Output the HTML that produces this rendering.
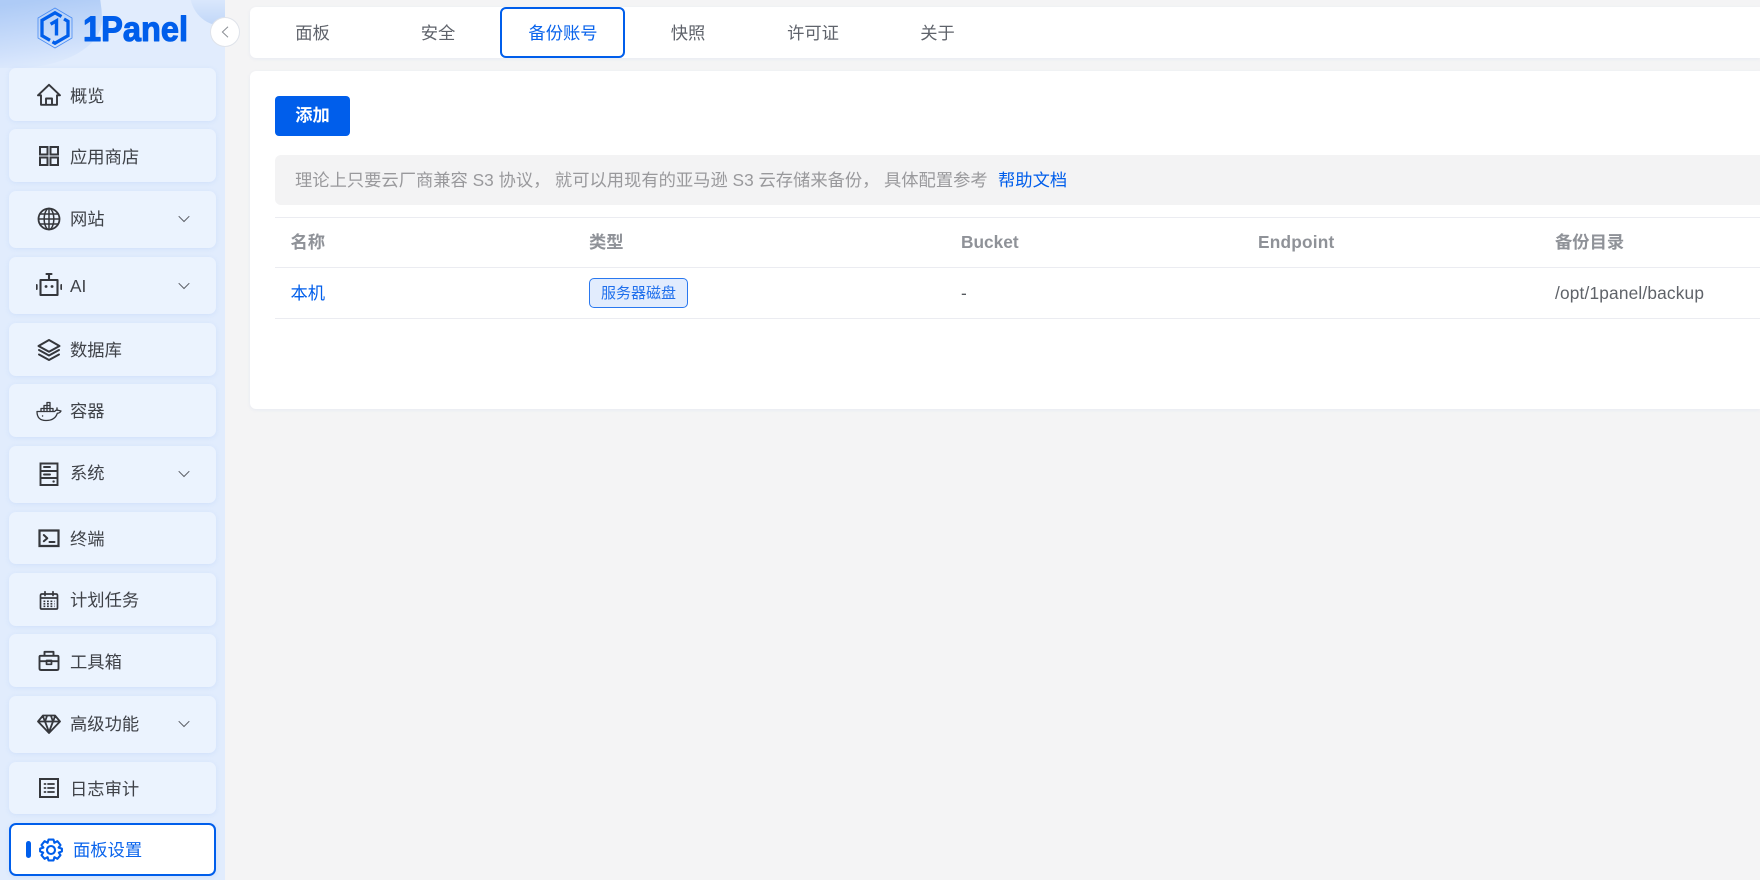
<!DOCTYPE html>
<html lang="zh-CN"><head><meta charset="utf-8"><title>1Panel</title>
<style>
*{box-sizing:border-box}
html,body{margin:0;padding:0;width:1760px;height:880px;overflow:hidden;background:#f4f4f5;font-family:"Liberation Sans","Noto Sans CJK SC",sans-serif;font-size:17.3px}
.a{position:absolute;white-space:nowrap}
.side{position:absolute;left:0;top:0;width:225px;height:880px;background:#e1ecfd;overflow:hidden}
.blob1{position:absolute;left:-20px;top:-97px;width:122px;height:165px;border-radius:0 122px 90px 0/0 122px 50px 0;background:linear-gradient(172deg,#aecbf6 58%,#cfe0fb 84%,#e1ecfd 97%)}
.blob2{position:absolute;left:190px;top:-40px;width:66px;height:66px;border-radius:50%;background:linear-gradient(180deg,#e1ecfd 50%,#c0d6f8)}
.it{position:absolute;left:9px;width:207px;background:#ebf3fe;border-radius:7px;box-shadow:0 1px 4px rgba(170,200,245,.3)}
.t{position:absolute;left:70px;line-height:24px;color:#3f4248;white-space:nowrap}
.ic{position:absolute;left:37px;width:24px;height:24px;fill:none;stroke:#35373c;stroke-width:1.7;stroke-linejoin:round;stroke-linecap:round}
.ch{position:absolute;left:178px;width:12px;height:8px;fill:none;stroke:#5a5d64;stroke-width:1}
.card{position:absolute;left:250px;width:1510px;background:#fff;border-radius:6px 0 0 6px;box-shadow:0 1px 3px rgba(215,222,238,.45)}
.tab{position:absolute;transform:translate(-50%,-50%);color:#5f636b;line-height:24px;white-space:nowrap}
.th{position:absolute;top:230px;line-height:24px;color:#8f9298;font-weight:bold;white-space:nowrap}
.ln{position:absolute;left:275px;width:1485px;height:1px;background:#ebecf1}
.cm{margin-right:4.5px}
</style></head><body>
<div class="side">
<div class="blob1"></div><div class="blob2"></div>
<div class="it" style="top:68px;height:53px"></div>
<div class="it" style="top:129px;height:53px"></div>
<div class="it" style="top:191px;height:57px"></div>
<div class="it" style="top:257px;height:57px"></div>
<div class="it" style="top:323px;height:53px"></div>
<div class="it" style="top:384px;height:53px"></div>
<div class="it" style="top:446px;height:57px"></div>
<div class="it" style="top:512px;height:52px"></div>
<div class="it" style="top:573px;height:53px"></div>
<div class="it" style="top:634px;height:53px"></div>
<div class="it" style="top:696px;height:57px"></div>
<div class="it" style="top:762px;height:52px"></div>
<div class="it" style="top:823px;height:53px;background:#fff;border:2px solid #005eeb"></div>

<svg class="a" style="left:36px;top:6px" width="40" height="44" viewBox="0 0 40 44" fill="none">
<path d="M19 2 36 12V32L19 42 2 32V12Z" stroke="#4a8cf3" stroke-width=".8"/>
<path d="M25.5 10.5 19 6.8 6 14.3V29.7L14 34.3" stroke="#005eeb" stroke-width="3.3" stroke-linejoin="miter"/>
<path d="M28 13 32 15.3V29.7L19 37.2 16.5 35.8" stroke="#005eeb" stroke-width="3.3" stroke-linejoin="miter"/>
<path d="M14.6 18.2 20.5 14.8V29.5" stroke="#005eeb" stroke-width="3.4" stroke-linejoin="miter"/>
</svg>
<svg class="a" style="left:80px;top:8px" width="112" height="40"><text x="3" y="33" font-family="Liberation Sans" font-weight="bold" font-size="35" fill="#005eeb" stroke="#005eeb" stroke-width="1.1" stroke-linejoin="round" textLength="105" lengthAdjust="spacingAndGlyphs">1Panel</text></svg>

<span class="t" style="top:84px">概览</span>
<span class="t" style="top:145px">应用商店</span>
<span class="t" style="top:207px">网站</span>
<span class="t" style="top:274px">AI</span>
<span class="t" style="top:338px">数据库</span>
<span class="t" style="top:399px">容器</span>
<span class="t" style="top:461px">系统</span>
<span class="t" style="top:527px">终端</span>
<span class="t" style="top:588px">计划任务</span>
<span class="t" style="top:650px">工具箱</span>
<span class="t" style="top:712px">高级功能</span>
<span class="t" style="top:777px">日志审计</span>
<span class="t" style="top:838px;left:73px;color:#0a64ec">面板设置</span>
<div class="a" style="left:26px;top:841px;width:5px;height:17px;border-radius:3px;background:#005eeb"></div>

<svg class="ch" style="top:215px" viewBox="0 0 12 8"><path d="M.7 1.2 6 6.5 11.3 1.2"/></svg>
<svg class="ch" style="top:282px" viewBox="0 0 12 8"><path d="M.7 1.2 6 6.5 11.3 1.2"/></svg>
<svg class="ch" style="top:470px" viewBox="0 0 12 8"><path d="M.7 1.2 6 6.5 11.3 1.2"/></svg>
<svg class="ch" style="top:720px" viewBox="0 0 12 8"><path d="M.7 1.2 6 6.5 11.3 1.2"/></svg>

<!-- home -->
<svg class="ic" style="top:83px" viewBox="0 0 24 24"><path d="M12 1.8 1 12.3 4 12.3V21.8H20V12.3H23ZM9 21.8V15.5H15V21.8" stroke-width="1.9"/></svg>
<!-- apps -->
<svg class="ic" style="top:144px" viewBox="0 0 24 24"><path d="M3 3H10.5V10.5H3ZM13.5 3H21V10.5H13.5ZM3 13.5H10.5V21H3ZM13.5 13.5H21V21H13.5Z" stroke-width="2" stroke-linejoin="miter"/></svg>
<!-- globe -->
<svg class="ic" style="top:207px" viewBox="0 0 24 24"><circle cx="12" cy="12" r="10.5" stroke-width="1.8"/><ellipse cx="12" cy="12" rx="4.8" ry="10.5" stroke-width="1.5"/><path d="M12 1.5V22.5M1.5 12H22.5M3 7H21M3 17H21" stroke-width="1.5"/></svg>
<!-- robot -->
<svg class="ic" style="top:272px;left:36px;width:26px;height:26px" viewBox="0 0 26 26"><path d="M4.5 8H21.5V23H4.5ZM13 8V3M10.5 2H15.5" stroke-width="2.1"/><path d="M.7 13V17M25.3 13V17" stroke-width="1.9"/><path d="M10 14.5H10.1M16 14.5H16.1" stroke-width="2.8"/></svg>
<!-- layers -->
<svg class="ic" style="top:338px" viewBox="0 0 24 24"><path d="M12 2 22.5 8 12 13.7 1.5 8ZM2 12 12 17.5 22 12M2 16.5 12 22 22 16.5" stroke-width="2"/></svg>
<!-- docker -->
<svg class="ic" style="top:399px;left:36px;width:26px;height:24px" viewBox="0 0 26 24"><path d="M1 12.5H18.8C19.5 11 21 10.8 22 11.3L25 12C24 14 22.5 14.2 21.3 14.3 19.5 20 14.5 21.5 10 21.5 4.5 21.5 1 19 1 12.5Z" stroke-width="1.3"/><path d="M5 12.5V9.5H17V12.5M8 12.5V6.5H14V12.5M11 12.5V3.5H14V9.5M8 9.5H14" stroke-width="1.3"/><path d="M21 9V11.3M6.5 17H6.6" stroke-width="1.4"/></svg>
<!-- server -->
<svg class="ic" style="top:462px" viewBox="0 0 24 24"><path d="M3.5 1.5H20.5V23H3.5ZM3.5 9H20.5M3.5 16H20.5M7 5H13M7 12.5H13" stroke-width="1.9" stroke-linejoin="miter"/><path d="M16.5 19.5H16.7" stroke-width="2.2"/></svg>
<!-- terminal -->
<svg class="ic" style="top:526px" viewBox="0 0 24 24"><path d="M2.5 4.5H21.5V20H2.5Z" stroke-width="2.2" stroke-linejoin="miter"/><path d="M6.8 9 10.3 12.2 6.8 15.2" stroke-width="2"/><path d="M12.5 16H17.5" stroke-width="2"/></svg>
<!-- calendar -->
<svg class="ic" style="top:587.5px" viewBox="0 0 24 24"><path d="M5 6H19Q20.5 6 20.5 7.5V20Q20.5 21 19.5 21H4.5Q3.5 21 3.5 20V7.5Q3.5 6 5 6ZM3.5 10H20.5M8 3.7V7.5M16 3.7V7.5" stroke-width="1.7"/><path d="M6.5 13.3H17.5M6.5 15.8H17.5M6.5 18.3H17.5" stroke-width="1.6" stroke-dasharray="1.8 1.7" stroke-linecap="butt"/></svg>
<!-- toolbox -->
<svg class="ic" style="top:649px" viewBox="0 0 24 24"><path d="M3.5 6.8H20.5Q21.5 6.8 21.5 7.8V19.5Q21.5 21 20 21H4Q2.5 21 2.5 19.5V7.8Q2.5 6.8 3.5 6.8ZM7.5 6.8V2.8H16.5V6.8M2.5 12.2H21.5" stroke-width="1.9"/><path d="M9.5 11.5H14.5V15.3H9.5Z" stroke-width="1.7"/></svg>
<!-- diamond -->
<svg class="ic" style="top:712px" viewBox="0 0 24 24"><path d="M6 3.5H18L23 9.5 12 21 1 9.5ZM1.5 9.5H22.5M8 9.5 12 20 16 9.5M8 9.5 10 4M16 9.5 14 4M8 9.5 5.8 4M16 9.5 18.2 4" stroke-width="1.8"/></svg>
<!-- log -->
<svg class="ic" style="top:776px" viewBox="0 0 24 24"><path d="M3 3H21V21H3Z" stroke-width="2" stroke-linejoin="miter"/><path d="M7.5 8H8.5M7.5 12H8.5M7.5 16H8.5M11 8H17M11 12H17M11 16H17" stroke-width="1.8"/></svg>
<!-- gear -->
<svg class="ic" style="top:838px;left:39px;stroke:#005eeb" viewBox="0 0 24 24"><circle cx="12" cy="12" r="4" stroke-width="2.1"/><path d="M9.5 1.6H14.5L15.4 4.8 18.4 3.2 21.5 7 19.6 9.6 22.9 10.6V13.4L19.8 14.6 21.5 17.2 18.4 20.8 15.4 19.2 14.5 22.4H9.5L8.6 19.2 5.6 20.8 2.5 17.2 4.2 14.6 1.1 13.4V10.6L4.4 9.6 2.5 7 5.6 3.2 8.6 4.8Z" stroke-width="2.1"/></svg>
</div>

<!-- collapse -->
<div class="a" style="left:211px;top:18px;width:28px;height:28px;border-radius:50%;background:#fff;box-shadow:0 0 0 1px #dfe3ea"></div>
<svg class="a" style="left:221px;top:26px" width="8" height="12" fill="none" stroke="#8a8e94" stroke-width="1"><path d="M7 .8 1.4 6 7 11.2"/></svg>

<!-- tabs -->
<div class="card" style="top:7px;height:51px">
 <span class="tab" style="left:62.5px;top:25.5px">面板</span>
 <span class="tab" style="left:188px;top:25.5px">安全</span>
 <div class="a" style="left:250px;top:0;width:125px;height:51px;border:2px solid #005eeb;border-radius:6px;background:#fff"></div>
 <span class="tab" style="left:313px;top:25.5px;color:#0a64ec">备份账号</span>
 <span class="tab" style="left:438px;top:25.5px">快照</span>
 <span class="tab" style="left:563px;top:25.5px">许可证</span>
 <span class="tab" style="left:687.5px;top:25.5px">关于</span>
</div>

<!-- content -->
<div class="card" style="top:71px;height:338px"></div>
<div class="a" style="left:275px;top:96px;width:75px;height:40px;background:#005eeb;border-radius:4px;color:#fff;font-weight:bold;text-align:center;line-height:39px">添加</div>
<div class="a" style="left:275px;top:155px;width:1485px;height:50px;background:#f3f3f4;border-radius:6px 0 0 6px"></div>
<span class="a" style="left:295px;top:168px;line-height:24px;color:#99999c">理论上只要云厂商兼容 S3 协议<span class="cm">，</span>就可以用现有的亚马逊 S3 云存储来备份<span class="cm">，</span>具体配置参考</span>
<span class="a" style="left:998px;top:168px;line-height:24px;color:#005eeb">帮助文档</span>

<div class="ln" style="top:217px"></div>
<div class="ln" style="top:267px"></div>
<div class="ln" style="top:318px"></div>
<span class="th" style="left:290.5px">名称</span>
<span class="th" style="left:589px">类型</span>
<span class="th" style="left:961px">Bucket</span>
<span class="th" style="left:1258px;letter-spacing:.2px">Endpoint</span>
<span class="th" style="left:1555px">备份目录</span>
<span class="a" style="left:290.5px;top:281px;line-height:24px;color:#005eeb">本机</span>
<div class="a" style="left:589px;top:278px;width:99px;height:30px;background:#e2ecfd;border:1px solid #2a78ef;border-radius:5px;color:#1f6fec;font-size:15px;line-height:29px;text-align:center">服务器磁盘</div>
<span class="a" style="left:961px;top:281px;line-height:24px;color:#55595f;letter-spacing:.2px">-</span>
<span class="a" style="left:1555px;top:281px;line-height:24px;color:#5f6369;letter-spacing:.17px">/opt/1panel/backup</span>
</body></html>
